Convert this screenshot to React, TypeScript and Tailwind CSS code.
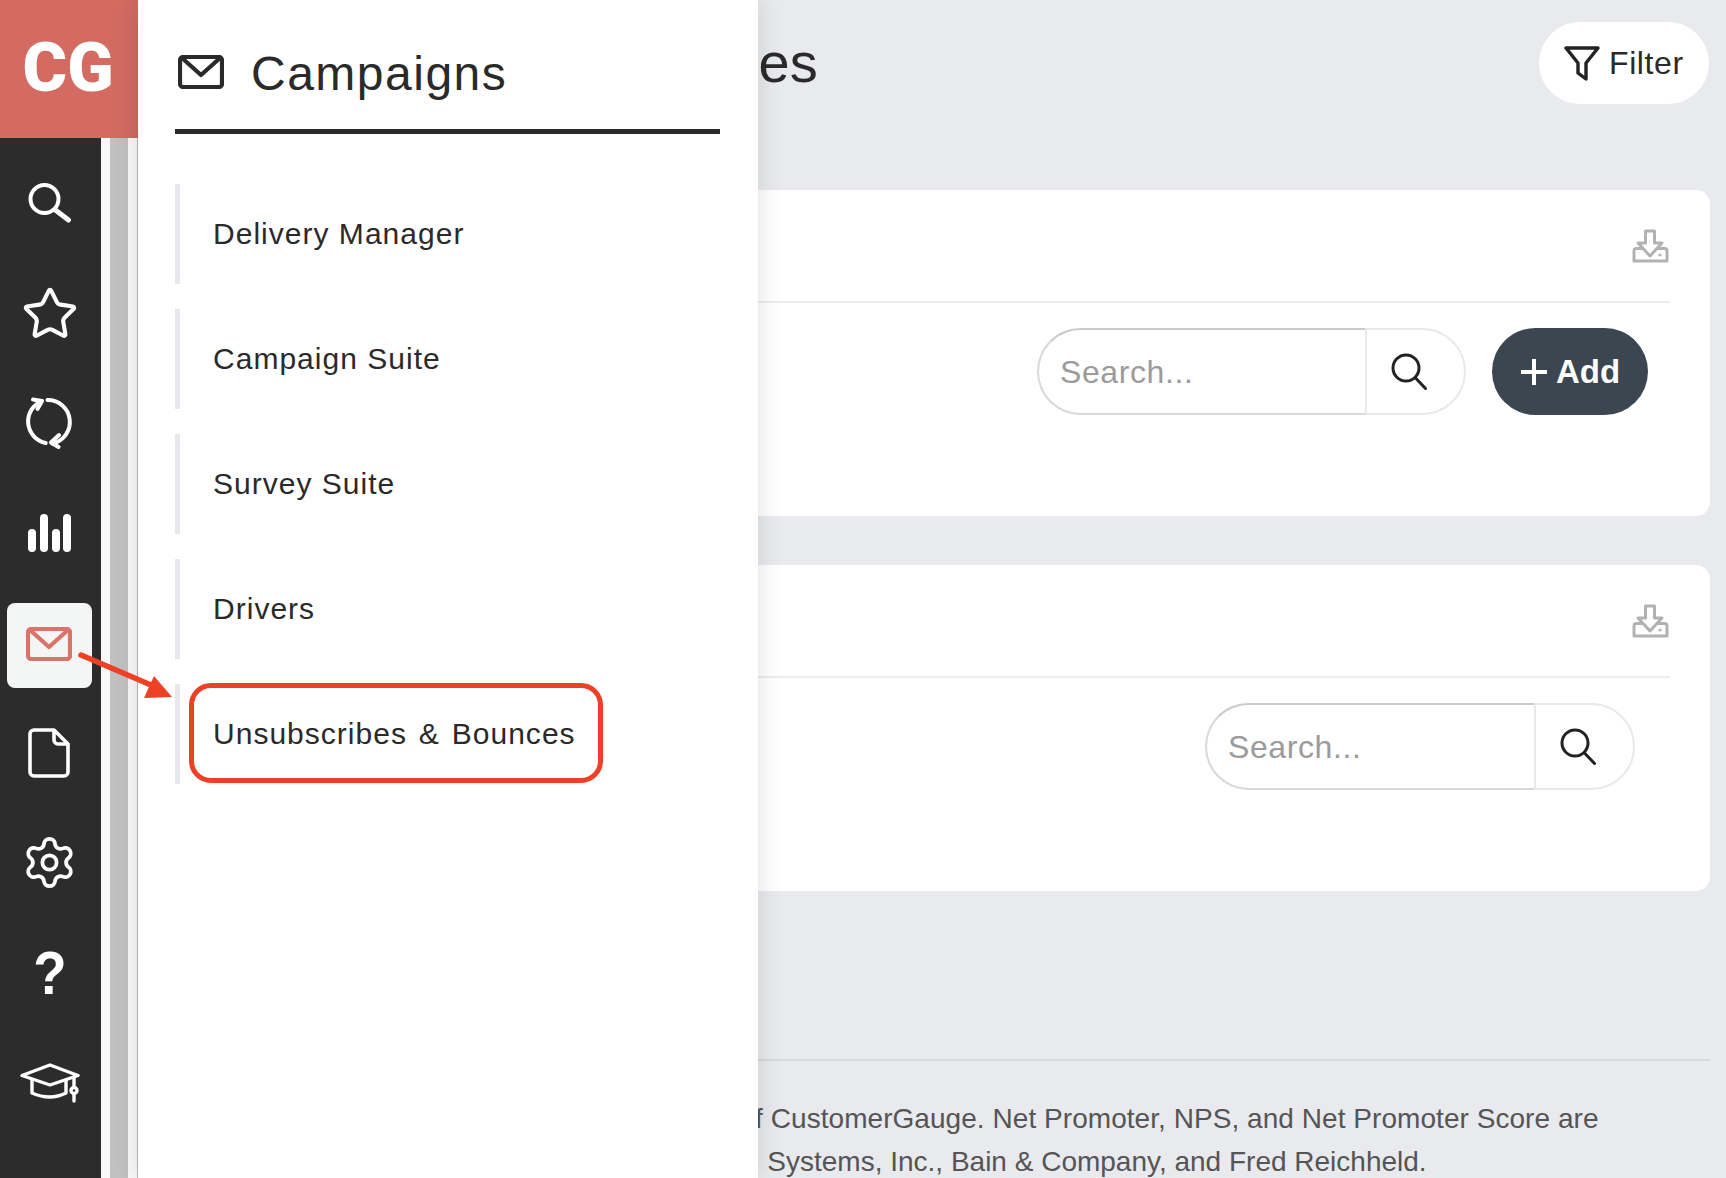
import React from "react";
import { Star, Settings } from "lucide-react";

function SearchGlyph({ className = "" }: { className?: string }) {
  return (
    <svg width="36" height="37" viewBox="0 0 36 37" fill="none" stroke="#222" strokeWidth="3" strokeLinecap="round" className={className}>
      <circle cx="15" cy="15" r="13" />
      <path d="M24.5 25L34.5 35.5" />
    </svg>
  );
}

function MailGlyph({ color }: { color: string }) {
  return (
    <svg width="46" height="34" viewBox="0 0 46 34" fill="none" stroke={color} strokeWidth="4.2" strokeLinejoin="round" strokeLinecap="round">
      <rect x="2" y="2" width="42" height="30" rx="3" />
      <path d="M4 3L23 20L42 3" />
    </svg>
  );
}

function DownloadGlyph() {
  return (
    <svg width="37" height="34" viewBox="0 0 37 34" fill="none" stroke="#b2b2b2" strokeWidth="3" strokeLinejoin="round">
      <path d="M13.5 2H22.5V14H30L18 27L6 14H13.5Z" />
      <path d="M10.5 19.5H4.5Q2 19.5 2 22V32H35V22Q35 19.5 32.5 19.5H25.5" />
      <circle cx="28" cy="26" r="1.6" fill="#b2b2b2" stroke="none" />
    </svg>
  );
}

function SearchBox({ leftWidth }: { leftWidth: string }) {
  return (
    <div className="flex h-[87px]">
      <div className={`${leftWidth} h-full rounded-l-[44px] border-2 border-r-0 border-[#d9d9d9] border-t-[#cccccc] pl-[21px] flex items-center text-[32px] tracking-[0.6px] text-[#9b9b9b]`}>
        Search...
      </div>
      <div className="w-[101px] h-full rounded-r-[44px] border-2 border-[#e9e9e9] flex items-center pl-[24px]">
        <SearchGlyph />
      </div>
    </div>
  );
}

function Card({ children }: { children: React.ReactNode }) {
  return (
    <section className="h-[326px] rounded-[14px] bg-white">
      <div className="h-[111px] flex justify-end pt-[39px] pr-[41px]">
        <DownloadGlyph />
      </div>
      <div className="h-[2px] mx-[40px] bg-[#ededed]" />
      {children}
    </section>
  );
}

const rail = [
  <svg key="s" width="44" height="44" viewBox="0 0 44 44" fill="none" stroke="white" strokeWidth="4" strokeLinecap="round">
    <circle cx="16.5" cy="18" r="14" />
    <path d="M28 29.5L40.5 39" strokeWidth="5" />
  </svg>,
  <Star key="st" size={58} strokeWidth={1.7} color="white" className="mb-[-2px]" />,
  <svg key="r" width="50" height="52" viewBox="0 0 50 52" fill="none" stroke="white" strokeWidth="4" strokeLinecap="round" strokeLinejoin="round" className="mr-[4px]">
    <path d="M19 4A22 22 0 0 0 22.7 46" />
    <path d="M24.5 3A22 22 0 0 1 29.5 46.5" />
    <path d="M10 2.5L19 4L14.5 12" />
    <path d="M36 38L28 45.5L35.5 50" />
  </svg>,
  <svg key="b" width="44" height="40" viewBox="0 0 44 40" fill="white" className="mr-[2px]">
    <rect x="1" y="16" width="8" height="23" rx="4" />
    <rect x="13" y="1" width="8" height="38" rx="4" />
    <rect x="25" y="16" width="8" height="23" rx="4" />
    <rect x="36" y="1" width="8" height="38" rx="4" />
  </svg>,
  null,
  <svg key="d" width="42" height="50" viewBox="0 0 42 50" fill="none" stroke="white" strokeWidth="3.6" strokeLinejoin="round" className="mr-[2px]">
    <path d="M6 2H26L40 16V44A4 4 0 0 1 36 48H6A4 4 0 0 1 2 44V6A4 4 0 0 1 6 2Z" />
    <path d="M26 2V12A4 4 0 0 0 30 16H40" />
  </svg>,
  <Settings key="g" size={57} strokeWidth={1.6} color="white" className="mr-[1px]" />,
  <span key="q" className="scale-x-[0.88] text-[62px] font-bold leading-none text-white">?</span>,
  <svg key="c" width="60" height="40" viewBox="0 0 60 40" fill="none" stroke="white" strokeWidth="3.4" strokeLinejoin="round" strokeLinecap="round">
    <path d="M30 2L58 12.5L30 22L2 12.5Z" />
    <path d="M12 17V30Q30 38 46 30V17" />
    <path d="M54 14V24M54 31V38" />
    <circle cx="54" cy="27.5" r="3" />
  </svg>,
];

const menu = ["Delivery Manager", "Campaign Suite", "Survey Suite", "Drivers", "Unsubscribes & Bounces"];

export default function App() {
  return (
    <div className="relative flex h-[1178px] w-[1726px] overflow-hidden bg-[#e9eaee] text-[#2a2a2a] font-['Liberation_Sans',Arial,sans-serif]">
      {/* Left rail */}
      <aside className="flex w-[138px] shrink-0 flex-col">
        <div className="flex h-[138px] items-center justify-center bg-[#d36b62] pb-[2px] pr-[2px] font-['Roboto',sans-serif] text-[68px] font-black leading-none text-white">
          CG
        </div>
        <div className="flex flex-1">
          <nav className="flex w-[101px] flex-col gap-[25px] bg-[#2c2c2c] pl-[7px] pt-[22px]">
            {rail.map((icon, i) =>
              icon ? (
                <div key={i} className="flex h-[85px] w-[85px] items-center justify-center">
                  {icon}
                </div>
              ) : (
                <div key={i} className="-mb-[3px] mt-[3px] flex h-[85px] w-[85px] items-center justify-center rounded-[8px] bg-[#f4f6f6] pb-[4px] pr-[1px]">
                  <MailGlyph color="#d9746a" />
                </div>
              )
            )}
          </nav>
          <div className="flex-1 border-r border-[#b9b9b9] bg-[#f9f9f9] pl-[9px]">
            <div className="h-full w-[18px] bg-[#c1c1c1]" />
          </div>
        </div>
      </aside>

      {/* Page behind the panel */}
      <main className="relative flex-1 pr-[16px]">
        <header className="flex h-[190px] items-start justify-between">
          <h1 className="ml-[54px] mt-[31px] whitespace-nowrap text-[56px] font-normal leading-[64px]">Unsubscribes &amp; Bounces</h1>
          <button className="mr-[1px] mt-[22px] flex h-[82px] w-[170px] items-center gap-[9px] rounded-[41px] bg-white pl-[25px] text-[32px] tracking-[0.6px]">
            <svg width="36" height="37" viewBox="0 0 36 37" fill="none" stroke="#222" strokeWidth="3.4" strokeLinejoin="round">
              <path d="M2 3H34L22 18V34L14 28V18Z" />
            </svg>
            Filter
          </button>
        </header>

        <div className="ml-[38px] flex flex-col gap-[49px]">
          <Card>
            <div className="flex justify-end gap-[26px] pr-[62px] pt-[25px]">
              <SearchBox leftWidth="w-[328px]" />
              <button className="flex h-[87px] w-[156px] items-center justify-center gap-[8px] rounded-[44px] bg-[#3b4650] text-[33px] font-bold text-white">
                <svg width="28" height="28" viewBox="0 0 28 28" stroke="white" strokeWidth="4"><path d="M14 1V27M1 14H27" /></svg>
                Add
              </button>
            </div>
          </Card>
          <Card>
            <div className="flex justify-end pr-[75px] pt-[25px]">
              <SearchBox leftWidth="w-[329px]" />
            </div>
          </Card>
        </div>

        <footer className="ml-[38px] mt-[168px] flex flex-col gap-[11px] border-t-2 border-[#d9dadd] pl-[148px] pt-[42px] text-[28px] leading-[32px] text-[#555555]">
          <p className="ml-[56px] whitespace-nowrap tracking-[0.05px]">All contents are the property of CustomerGauge. Net Promoter, NPS, and Net Promoter Score are</p>
          <p className="whitespace-nowrap">registered trademarks of Satmetrix <span className="ml-[6px]">Systems, Inc., Bain &amp; Company, and Fred Reichheld.</span></p>
        </footer>

        {/* Slide-out panel */}
        <div className="absolute left-0 top-0 h-full w-[620px] bg-white pl-[37px] pr-[38px] shadow-[0_0_26px_rgba(0,0,0,0.13)]">
          <div className="flex h-[134px] items-center gap-[27px] border-b-[5px] border-[#2a2a2a] pl-[3px] pt-[15px]">
            <MailGlyph color="#2a2a2a" />
            <h2 className="mt-[4px] text-[48px] font-normal leading-none tracking-[1.5px]">Campaigns</h2>
          </div>
          <ul className="flex flex-col gap-[25px] pt-[50px]">
            {menu.map((m, i) => (
              <li key={m} className={`relative flex h-[100px] items-center border-l-[5px] border-[#e6e7eb] pb-[2px] pl-[33px] text-[30px] tracking-[1.02px] ${i === 4 ? "[word-spacing:2.5px]" : ""}`}>
                {m}
                {i === 4 && <span className="absolute left-[9px] top-[-1px] h-[100px] w-[414px] rounded-[22px] border-[5px] border-[#ec4126]" />}
              </li>
            ))}
          </ul>
        </div>
      </main>

      {/* Annotation arrow */}
      <svg className="absolute left-[70px] top-[645px]" width="110" height="60" viewBox="0 0 110 60" fill="#ec4126">
        <path d="M11 10L88 43" stroke="#ec4126" strokeWidth="5.5" strokeLinecap="round" />
        <path d="M84 31L102 52L74 53Z" />
      </svg>
    </div>
  );
}
